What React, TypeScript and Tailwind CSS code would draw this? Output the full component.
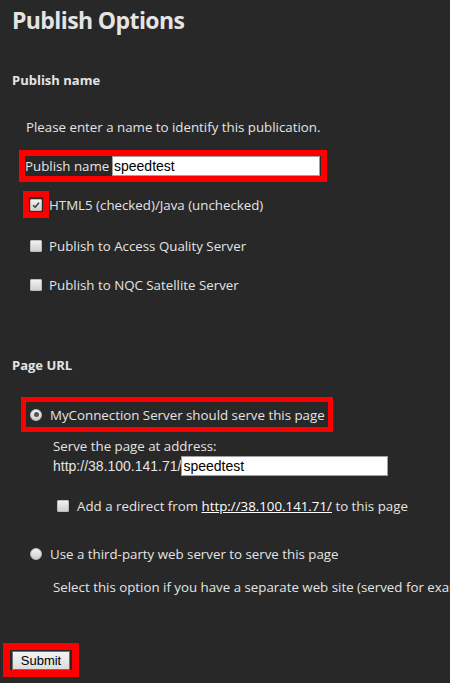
import React from "react";

// Publish options form, dark theme, with red highlight boxes around some fields
const CheckBox = ({ checked = false }: { checked?: boolean }) => (
    <span className="flex h-[12px] w-[12px] shrink-0 items-center justify-center rounded-[1px] border border-[#bdbdbd] bg-gradient-to-b from-[#f2f2f2] to-[#cfcfcf]">
        {checked && (
            <svg viewBox="0 0 12 12" className="h-[10px] w-[10px]">
                <path d="M2.5 6.2 L5 8.6 L9.6 3.2" fill="none" stroke="#3a3a3a" strokeWidth="1.8" />
            </svg>
        )}
    </span>
);

const Radio = ({ checked = false }: { checked?: boolean }) => (
    <span className="flex h-[12px] w-[12px] shrink-0 items-center justify-center rounded-full border border-[#bdbdbd] bg-gradient-to-b from-[#f2f2f2] to-[#cfcfcf]">
        {checked && <span className="h-[5px] w-[5px] rounded-full bg-[#555]" />}
    </span>
);

const App = () => {
    return (
        <div className="h-[683px] w-[450px] overflow-hidden bg-[#282828] font-['Open_Sans',sans-serif] text-[13.3px] leading-[20px] text-[#e4e4e4]">
            {/* Header */}
            <h1 className="pl-3 pt-[4px] text-[23px] font-bold leading-[32px] tracking-[-0.6px]">Publish Options</h1>

            {/* Publish name section */}
            <h2 className="mt-[34px] pl-3 text-[13px] font-bold">Publish name</h2>
            <p className="mt-[27px] pl-[26px]">Please enter a name to identify this publication.</p>

            <div className="ml-[19px] mt-[13px] flex h-[32px] w-[308px] items-center border-[6px] border-[#ff0000]">
                <span className="w-[87px] whitespace-nowrap">Publish name</span>
                <div className="flex h-[20px] w-[208px] items-center border border-[#a0a0a0] bg-white pl-[1px] font-['Liberation_Sans',Arial,sans-serif] text-[14px] text-black">
                    speedtest
                </div>
            </div>

            <div className="mt-[9px] flex items-center">
                <span className="ml-[23px] flex h-[27px] w-[26px] items-center justify-center border-[6px] border-[#ff0000]">
                    <CheckBox checked />
                </span>
                <span className="whitespace-nowrap">HTML5 (checked)/Java (unchecked)</span>
            </div>

            <div className="mt-[18px] flex h-[20px] items-center">
                <span className="ml-[30px] mr-[7px]">
                    <CheckBox />
                </span>
                <span>Publish to Access Quality Server</span>
            </div>

            <div className="mt-[19px] flex h-[20px] items-center">
                <span className="ml-[30px] mr-[7px]">
                    <CheckBox />
                </span>
                <span>Publish to NQC Satellite Server</span>
            </div>

            {/* Page URL section */}
            <h2 className="mt-[60px] pl-3 text-[13px] font-bold">Page URL</h2>

            <div className="ml-[21px] mt-[22px] flex h-[35px] w-[312px] items-center border-[5px] border-[#ff0000] pl-[4px]">
                <Radio checked />
                <span className="ml-[8px] whitespace-nowrap">MyConnection Server should serve this page</span>
            </div>

            <div className="pl-[53px]">
                <p className="mt-[4px]">Serve the page at address:</p>
                <div className="flex h-[20px] items-center">
                    <span className="font-['Liberation_Sans',Arial,sans-serif] text-[14px]">http://38.100.141.71/</span>
                    <div className="flex h-[20px] w-[207px] items-center border border-[#a0a0a0] bg-white pl-[1px] font-['Liberation_Sans',Arial,sans-serif] text-[14px] text-black">
                        speedtest
                    </div>
                </div>
            </div>

            <div className="mt-[20px] flex h-[20px] items-center pl-[57px]">
                <CheckBox />
                <span className="ml-[8px] whitespace-nowrap">
                    Add a redirect from{" "}
                    <a href="#" className="text-white underline">
                        http://38.100.141.71/
                    </a>{" "}
                    to this page
                </span>
            </div>

            <div className="mt-[28px] flex h-[20px] items-center pl-[30px]">
                <Radio />
                <span className="ml-[8px] whitespace-nowrap">Use a third-party web server to serve this page</span>
            </div>

            <p className="mt-[13px] whitespace-nowrap pl-[53px]">
                Select this option if you have a separate web site (served for example by Apache or IIS)
            </p>

            {/* Submit */}
            <div className="ml-[3px] mt-[46px] flex h-[34px] w-[76px] items-center justify-center border-[7px] border-[#ff0000]">
                <button className="h-[19px] w-[58px] border border-[#707070] bg-gradient-to-b from-[#f4f4f4] to-[#dcdcdc] font-['Liberation_Sans',Arial,sans-serif] text-[13px] leading-[17px] text-black">
                    Submit
                </button>
            </div>
        </div>
    );
};

export default App;
